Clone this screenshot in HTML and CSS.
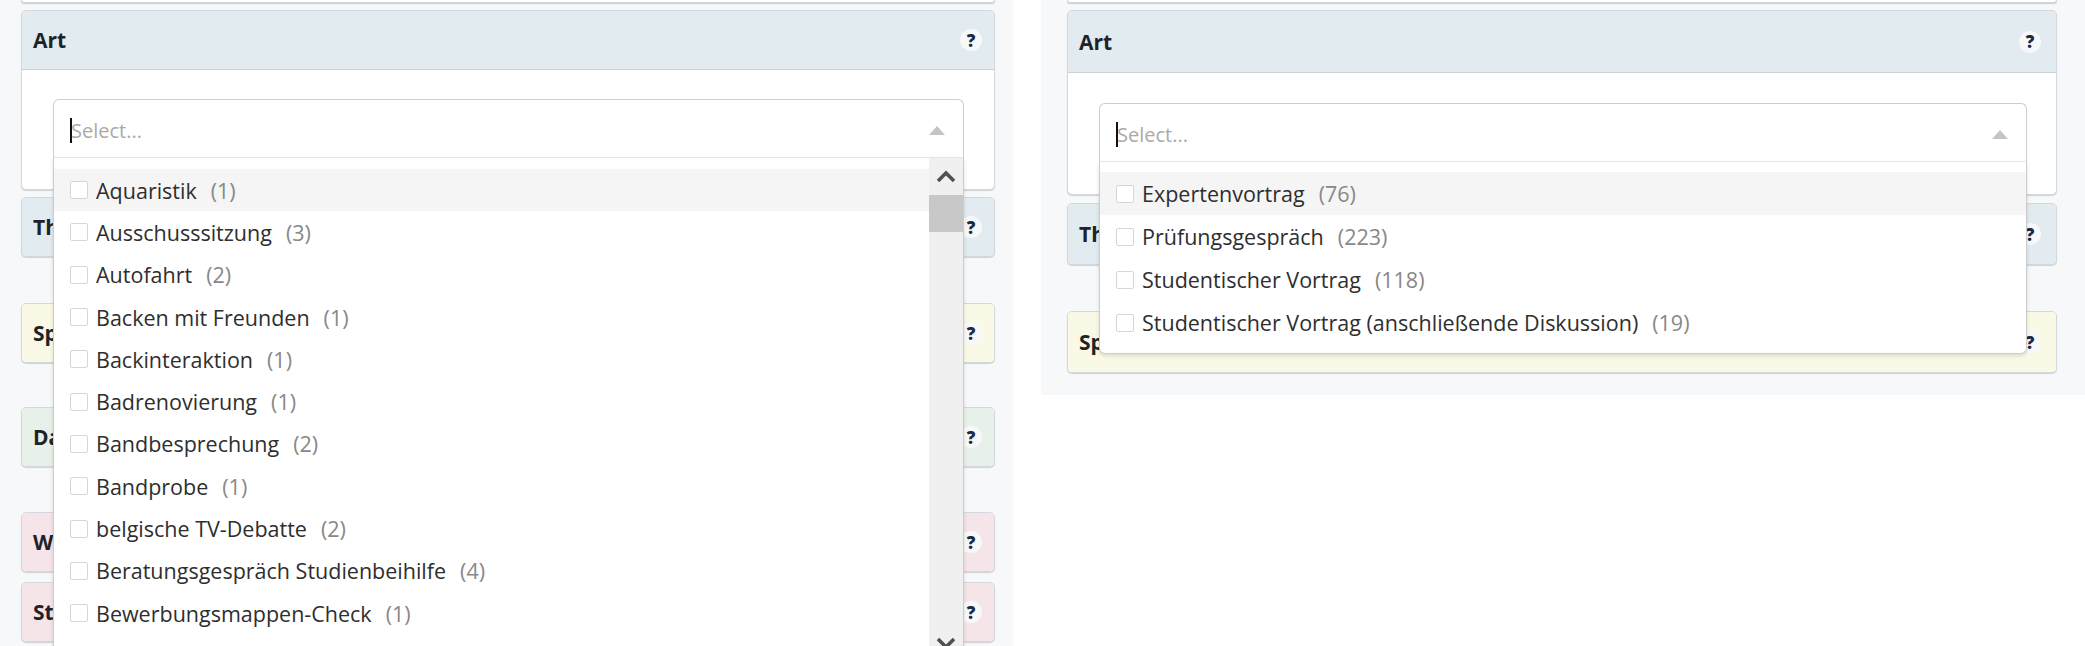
FILE: index.html
```html
<!DOCTYPE html>
<html lang="de">
<head>
<meta charset="utf-8">
<title>Filter</title>
<link rel="stylesheet" href="styles.css">
</head>
<body>
<div class="page">
  <section class="panel panel-left">
    <div class="card-stub"></div>
    <div class="card card-open">
      <div class="card-head head-blue"><span class="card-title">Art</span><span class="help">?</span></div>
      <div class="card-body">
        <div class="select">
          <div class="select-control"><span class="caret"></span><span class="placeholder">Select...</span><span class="arrow"></span></div>
          <div class="menu menu-long">
            <ul class="options">
              <li class="option active"><span class="check"></span><span class="label">Aquaristik</span><span class="count">(1)</span></li>
              <li class="option"><span class="check"></span><span class="label">Ausschusssitzung</span><span class="count">(3)</span></li>
              <li class="option"><span class="check"></span><span class="label">Autofahrt</span><span class="count">(2)</span></li>
              <li class="option"><span class="check"></span><span class="label">Backen mit Freunden</span><span class="count">(1)</span></li>
              <li class="option"><span class="check"></span><span class="label">Backinteraktion</span><span class="count">(1)</span></li>
              <li class="option"><span class="check"></span><span class="label">Badrenovierung</span><span class="count">(1)</span></li>
              <li class="option"><span class="check"></span><span class="label">Bandbesprechung</span><span class="count">(2)</span></li>
              <li class="option"><span class="check"></span><span class="label">Bandprobe</span><span class="count">(1)</span></li>
              <li class="option"><span class="check"></span><span class="label">belgische TV-Debatte</span><span class="count">(2)</span></li>
              <li class="option"><span class="check"></span><span class="label">Beratungsgespräch Studienbeihilfe</span><span class="count">(4)</span></li>
              <li class="option"><span class="check"></span><span class="label">Bewerbungsmappen-Check</span><span class="count">(1)</span></li>
            </ul>
            <div class="scrollbar">
              <div class="sb-btn"><svg width="20" height="13" viewBox="0 0 20 13"><polyline points="2,11 10,3 18,11" fill="none" stroke="#505050" stroke-width="3.6"/></svg></div>
              <div class="sb-thumb"></div>
              <div class="sb-track"></div>
              <div class="sb-btn"><svg width="20" height="13" viewBox="0 0 20 13"><polyline points="2,2 10,10 18,2" fill="none" stroke="#505050" stroke-width="3.6"/></svg></div>
            </div>
          </div>
        </div>
      </div>
    </div>
    <div class="card gap-s"><div class="card-head head-blue"><span class="card-title">Thema</span><span class="help">?</span></div></div>
    <div class="card gap-l"><div class="card-head head-yellow"><span class="card-title">Sprache</span><span class="help">?</span></div></div>
    <div class="card gap-l2"><div class="card-head head-green"><span class="card-title">Datum</span><span class="help">?</span></div></div>
    <div class="card gap-l3"><div class="card-head head-pink"><span class="card-title">Wissenschaftszweig</span><span class="help">?</span></div></div>
    <div class="card gap-m"><div class="card-head head-pink"><span class="card-title">Studiengang</span><span class="help">?</span></div></div>
  </section>

  <section class="panel panel-right">
    <div class="card-stub"></div>
    <div class="card card-open">
      <div class="card-head head-blue"><span class="card-title">Art</span><span class="help">?</span></div>
      <div class="card-body">
        <div class="select">
          <div class="select-control"><span class="caret"></span><span class="placeholder">Select...</span><span class="arrow"></span></div>
          <div class="menu menu-short">
            <ul class="options">
              <li class="option active"><span class="check"></span><span class="label">Expertenvortrag</span><span class="count">(76)</span></li>
              <li class="option"><span class="check"></span><span class="label">Prüfungsgespräch</span><span class="count">(223)</span></li>
              <li class="option"><span class="check"></span><span class="label">Studentischer Vortrag</span><span class="count">(118)</span></li>
              <li class="option"><span class="check"></span><span class="label">Studentischer Vortrag (anschließende Diskussion)</span><span class="count">(19)</span></li>
            </ul>
          </div>
        </div>
      </div>
    </div>
    <div class="card gap-s2"><div class="card-head head-blue"><span class="card-title">Thema</span><span class="help">?</span></div></div>
    <div class="card gap-l"><div class="card-head head-yellow"><span class="card-title">Sprache</span><span class="help">?</span></div></div>
  </section>
</div>
</body>
</html>
```
FILE: styles.css
```css
* { box-sizing: border-box; }

html, body {
  margin: 0;
  padding: 0;
  background: #ffffff;
}

body {
  font-family: "Open Sans", "Noto Sans", "DejaVu Sans", sans-serif;
  color: #333333;
}

.page {
  display: flex;
  align-items: flex-start;
  gap: 28px;
  height: 646px;
  overflow: hidden;
}

.panel {
  background: #f7f8fa;
  display: flex;
  flex-direction: column;
}

.panel-left {
  width: 1013px;
  height: 646px;
  padding: 0 18px 0 21px;
}

.panel-right {
  width: 1044px;
  height: 395px;
  padding: 0 28px 0 26px;
}

.card-stub {
  height: 3px;
  background: #ffffff;
  border: 1px solid #d2d9de;
  border-top: none;
  border-radius: 0 0 5px 5px;
  box-shadow: 0 1px 1px rgba(0, 0, 0, 0.18);
  flex-shrink: 0;
}

.card {
  margin-top: 7px;
  background: #ffffff;
  border: 1px solid #d2d9de;
  border-radius: 5px;
  box-shadow: 0 1px 1px rgba(0, 0, 0, 0.16);
  flex-shrink: 0;
}

.gap-s { margin-top: 7px; }
.gap-s2 { margin-top: 8px; }
.gap-l { margin-top: 46px; }
.gap-l2 { margin-top: 44px; }
.gap-l3 { margin-top: 45px; }
.gap-m { margin-top: 10px; }

.card-head {
  height: 58px;
  display: flex;
  align-items: center;
  justify-content: space-between;
  padding: 0 12px 0 11px;
  border-radius: 4px;
}

.panel-right .card-head { height: 60px; padding-right: 15px; }

.card-open .card-head {
  border-radius: 4px 4px 0 0;
  border-bottom: 1px solid #c8d2d8;
  height: 59px;
}

.panel-right .card-open .card-head { height: 62px; }

.head-blue { background: #e1ebf0; }
.head-yellow { background: #f9f9e5; }
.head-green { background: #e7f1e9; }
.head-pink { background: #f5e5e8; }

.card-title {
  font-size: 21px;
  font-weight: 700;
  color: #1f2328;
  white-space: nowrap;
}

.help {
  width: 22px;
  height: 22px;
  border-radius: 50%;
  background: #f6f8fa;
  display: flex;
  align-items: center;
  justify-content: center;
  font-size: 17px;
  font-weight: 800;
  color: #1c2942;
  line-height: 1;
}

.card-body {
  padding: 29px 30px 31px 31px;
}

.panel-right .card-body {
  padding: 30px 29px 32px 31px;
}

.select {
  position: relative;
}

.select-control {
  height: 59px;
  border: 1px solid #cccccc;
  border-bottom-color: #e8e8e8;
  border-radius: 6px 6px 0 0;
  background: #ffffff;
  display: flex;
  align-items: center;
  padding: 3px 18px 0 16px;
}

.caret {
  width: 2px;
  height: 25px;
  background: #111111;
  margin-right: -1px;
  flex-shrink: 0;
}

.placeholder {
  font-size: 20px;
  color: #aaaaaa;
  flex: 1;
}

.arrow {
  width: 0;
  height: 0;
  border-left: 8px solid transparent;
  border-right: 8px solid transparent;
  border-bottom: 9px solid #c4c4c4;
}

.menu {
  position: absolute;
  top: 100%;
  left: 0;
  right: 0;
  z-index: 10;
  background: #ffffff;
  border: 1px solid #cccccc;
  border-top: none;
  box-shadow: 0 2px 4px rgba(0, 0, 0, 0.12);
  display: flex;
}

.menu-long {
  height: 505px;
}

.menu-short {
  border-radius: 0 0 6px 6px;
  padding: 10px 0 9px;
}

.options {
  list-style: none;
  margin: 0;
  padding: 0;
  flex: 1;
  overflow: hidden;
}

.menu-long .options {
  padding-top: 11px;
}

.option {
  height: 42.3px;
  display: flex;
  align-items: center;
  padding-left: 16px;
  font-size: 21.5px;
  color: #2e2e2e;
  white-space: nowrap;
}

.menu-short .option {
  height: 43px;
}

.option.active {
  background: #f5f5f5;
}

.check {
  width: 18px;
  height: 18px;
  border: 1px solid #d6d6d6;
  border-radius: 2px;
  background: #ffffff;
  margin-right: 8px;
  flex-shrink: 0;
}

.count {
  color: #888888;
  margin-left: 14px;
}

.scrollbar {
  width: 34px;
  background: #f0f0f0;
  display: flex;
  flex-direction: column;
  flex-shrink: 0;
}

.sb-btn {
  height: 37px;
  display: flex;
  align-items: center;
  justify-content: center;
}

.sb-thumb {
  height: 37px;
  background: #c8c8c8;
}

.sb-track {
  flex: 1;
}
```
